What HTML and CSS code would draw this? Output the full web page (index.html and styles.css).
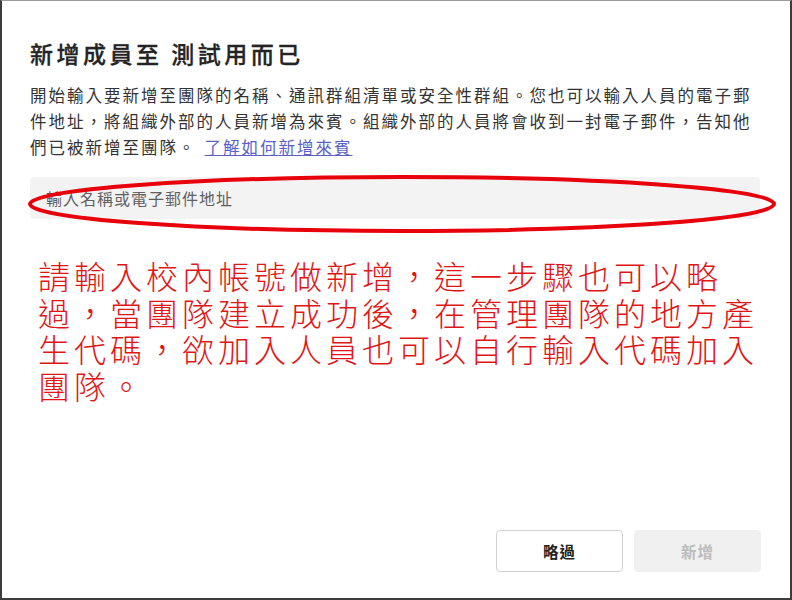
FILE: index.html
```html
<!DOCTYPE html>
<html lang="zh-Hant">
<head>
<meta charset="utf-8">
<link rel="stylesheet" href="styles.css">
</head>
<body>
<div class="frame">
  <div class="dialog">
    <h1 class="title">新增成員至 測試用而已</h1>
    <p class="desc">開始輸入要新增至團隊的名稱、通訊群組清單或安全性群組。您也可以輸入人員的電子郵件地址，將組織外部的人員新增為來賓。組織外部的人員將會收到一封電子郵件，告知他們已被新增至團隊。<span class="gap"></span><a class="link" href="#">了解如何新增來賓</a></p>
    <div class="field">
      <div class="input">輸入名稱或電子郵件地址</div>
      <svg class="mark" width="760" height="70" viewBox="0 0 760 70">
        <ellipse cx="375" cy="31" rx="372" ry="27" fill="none" stroke="#e8000b" stroke-width="4"/>
      </svg>
    </div>
    <p class="note">請輸入校內帳號做新增，這一步驟也可以略過，當團隊建立成功後，在管理團隊的地方產生代碼，欲加入人員也可以自行輸入代碼加入團隊。</p>
    <div class="footer">
      <button class="btn btn-skip">略過</button>
      <button class="btn btn-add" disabled>新增</button>
    </div>
  </div>
</div>
</body>
</html>
```

FILE: styles.css
```css
* { box-sizing: border-box; }
html, body {
  margin: 0;
  padding: 0;
  width: 792px;
  height: 600px;
  overflow: hidden;
  background: #ffffff;
}
.frame {
  width: 792px;
  height: 600px;
  border-left: 2px solid #3c3c3c;
  border-right: 2px solid #3c3c3c;
  border-bottom: 2px solid #3c3c3c;
  border-top: 1px solid #9a9a9a;
  background: #fff;
}
.dialog {
  height: 100%;
  display: flex;
  flex-direction: column;
  padding: 36px 28px 26px 28px;
  font-family: "Noto Sans CJK TC", "Noto Sans", sans-serif;
  color: #242424;
}
.title {
  margin: 0;
  font-size: 23px;
  line-height: 32px;
  font-weight: 500;
  letter-spacing: 3.5px;
  color: #242424;
  -webkit-text-stroke: 0.3px #242424;
}
.desc {
  margin: 13px 0 0 0;
  font-size: 16.5px;
  line-height: 26px;
  letter-spacing: 2px;
  color: #333;
  width: 732px;
}
.gap {
  display: inline-block;
  width: 8px;
}
.link {
  color: #5b5fc7;
  text-decoration: underline;
}
.field {
  position: relative;
  margin-top: 17px;
  width: 730px;
}
.input {
  height: 42px;
  background: #f3f3f3;
  border-radius: 4px;
  padding-left: 16px;
  font-size: 16px;
  line-height: 42px;
  letter-spacing: 1px;
  color: #616161;
}
.mark {
  position: absolute;
  left: -3px;
  top: -4px;
}
.note {
  margin: 38px 0 0 8px;
  width: 740px;
  font-size: 32px;
  line-height: 36.5px;
  letter-spacing: 4px;
  font-weight: 300;
  color: #e01616;
}
.footer {
  margin-top: auto;
  display: flex;
  justify-content: flex-end;
  gap: 11px;
  width: 731px;
}
.btn {
  width: 127px;
  height: 42px;
  border-radius: 4px;
  font-family: "Noto Sans CJK TC", "Noto Sans", sans-serif;
  font-size: 15.5px;
  font-weight: 700;
  letter-spacing: 1px;
}
.btn-skip {
  background: #fff;
  border: 1px solid #d1d1d1;
  color: #242424;
}
.btn-add {
  background: #f0f0f0;
  border: 1px solid #f0f0f0;
  color: #bdbdbd;
}
```
